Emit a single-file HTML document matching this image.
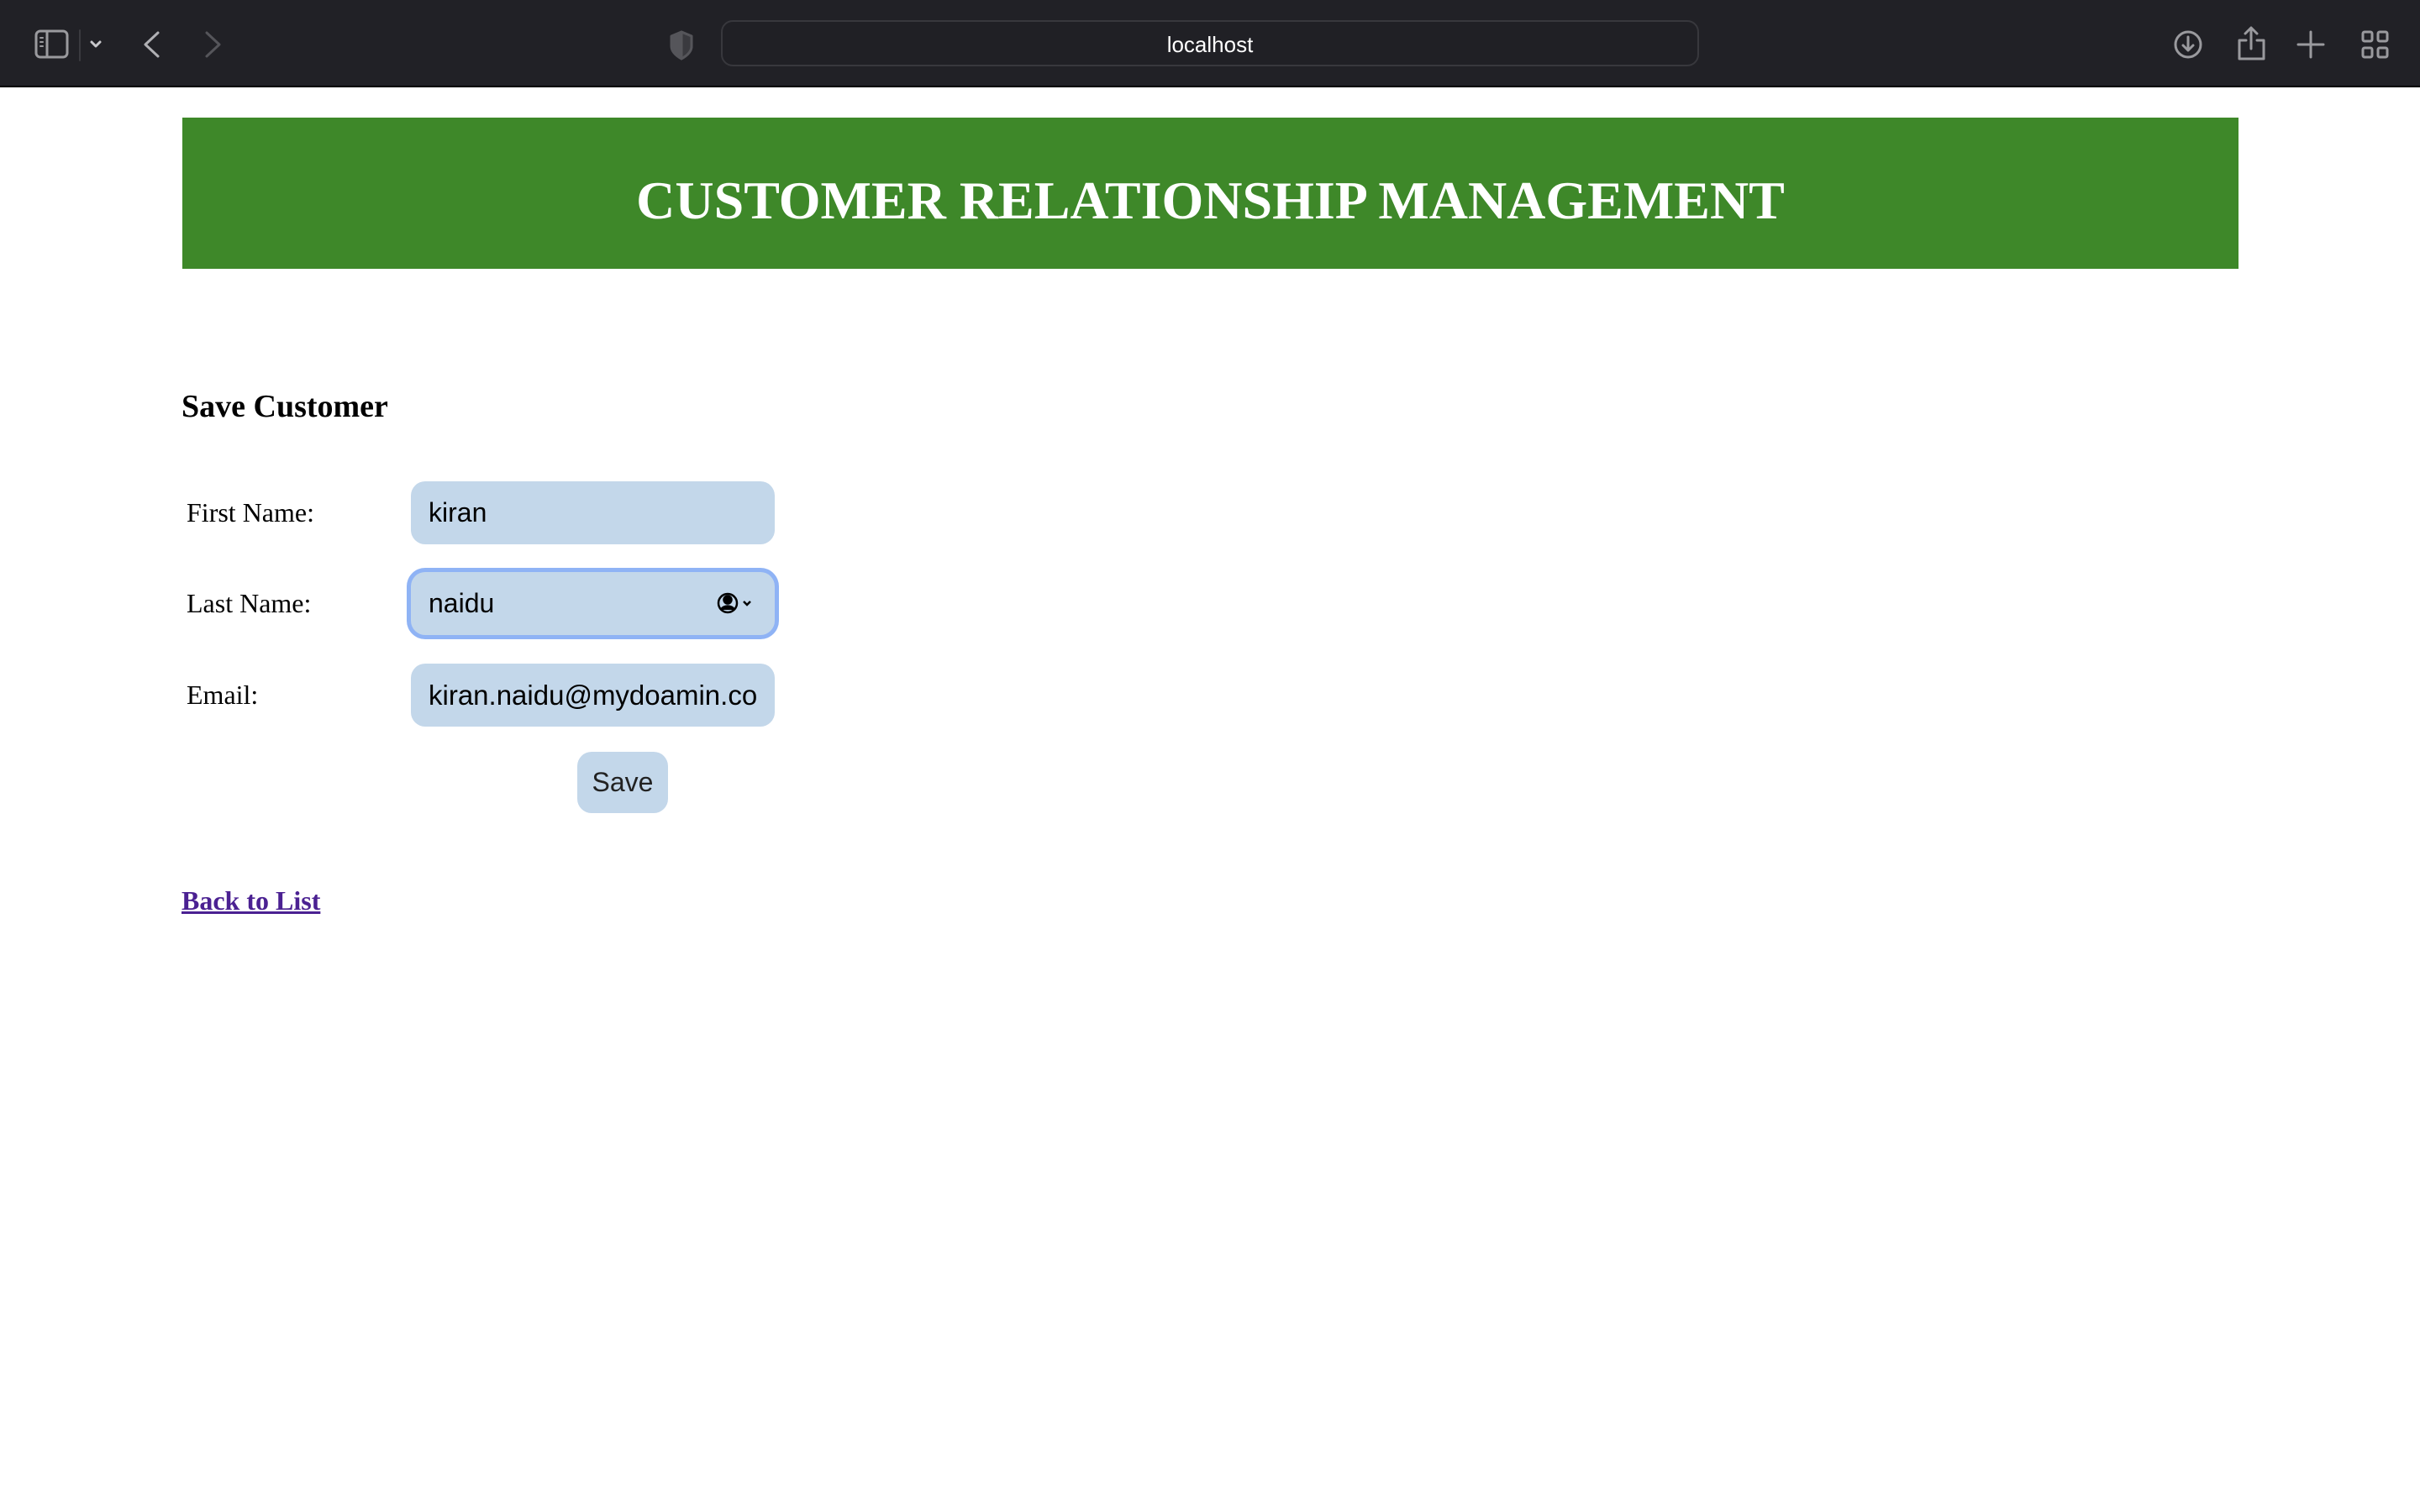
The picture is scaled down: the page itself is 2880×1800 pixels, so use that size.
<!DOCTYPE html>
<html><head><meta charset="utf-8"><style>
*{margin:0;padding:0;box-sizing:border-box}
body{width:2880px;height:1800px;background:#fff;position:relative;overflow:hidden;font-family:"Liberation Serif",serif}
#bar{position:absolute;left:0;top:0;width:2880px;height:104px;background:#212126;border-bottom:2px solid #000}
#addr{position:absolute;left:858px;top:24px;width:1164px;height:55px;border:2px solid #38383d;border-radius:14px;background:#202025}
#addr span{position:absolute;left:0;right:0;top:12px;text-align:center;color:#fff;font:26px "Liberation Sans",sans-serif}
.abs{position:absolute}
#banner{position:absolute;left:217px;top:140px;width:2447px;height:180px;background:#3e8829;color:#fff;text-align:center;font-weight:bold;font-size:64px;line-height:198px}
h3{position:absolute;left:216px;top:462px;font-size:38px;font-weight:bold}
.lbl{position:absolute;left:222px;font-size:32px;line-height:75px}
.inp{position:absolute;left:489px;width:433px;height:75px;background:#c3d7ea;border-radius:17px;font:32px "Liberation Sans",sans-serif;color:#000;padding-left:21px;line-height:75px;white-space:nowrap;overflow:hidden}
#save{position:absolute;left:687px;top:895px;width:108px;height:73px;background:#c3d7ea;border-radius:17px;font:32px "Liberation Sans",sans-serif;color:#222;text-align:center;line-height:73px}
a{position:absolute;left:216px;top:1054px;font-size:32px;font-weight:bold;color:#4b2192;text-decoration:underline}
</style></head><body>
<div id="bar">
<svg class="abs" style="left:0;top:0" width="2880" height="104" fill="none" stroke="#9a9a9e" stroke-width="3" stroke-linecap="round" stroke-linejoin="round">
<rect x="43" y="37" width="37" height="31" rx="5"/><line x1="56" y1="38" x2="56" y2="67"/>
<line x1="48" y1="45" x2="51" y2="45" stroke-width="2"/><line x1="48" y1="50" x2="51" y2="50" stroke-width="2"/><line x1="48" y1="55" x2="51" y2="55" stroke-width="2"/>
<line x1="95" y1="36" x2="95" y2="72" stroke="#3a3a3f" stroke-width="2"/>
<path d="M109 50l5 5 5-5" stroke="#c8c8cc"/>
<path d="M188 39l-15 14 15 14" stroke="#b0b0b4"/>
<path d="M246 39l15 14-15 14" stroke="#55555a"/>
<path d="M811 38l-12 5v12c0 6 5 11 12 15c7-4 12-9 12-15v-12z" stroke="#55555a" fill="#55555a"/>
<path d="M811 38l12 5v12c0 6-5 11-12 15z" fill="#3a3a3f" stroke="#55555a"/>
<rect x="1937" y="40" width="18" height="16" rx="3" stroke="#ccc" stroke-width="2.5"/>
<rect x="1955" y="48" width="18" height="16" rx="3" fill="#ccc" stroke="#ccc" stroke-width="2"/>
<path d="M2008 44a11 11 0 1 1-10-4" stroke="#ccc" stroke-width="2.5"/><path d="M1997 35l4 5-5 3" stroke="#ccc" stroke-width="2.5"/>
<circle cx="2604" cy="53" r="15"/><path d="M2604 44v16M2598 54l6 6 6-6"/>
<path d="M2673 48h-8v22h29v-22h-8M2679 34v24M2672 40l7-7 7 7"/>
<path d="M2750 38v30M2735 53h30"/>
<rect x="2812" y="38" width="11" height="11" rx="2"/><rect x="2830" y="38" width="11" height="11" rx="2"/><rect x="2812" y="57" width="11" height="11" rx="2"/><rect x="2830" y="57" width="11" height="11" rx="2"/>
</svg>
<div id="addr"><span>localhost</span></div>
</div>
<div id="banner">CUSTOMER RELATIONSHIP MANAGEMENT</div>
<h3>Save Customer</h3>
<div class="lbl" style="top:573px">First Name:</div>
<div class="lbl" style="top:681px">Last Name:</div>
<div class="lbl" style="top:790px">Email:</div>
<div class="inp" style="top:573px">kiran</div>
<div class="inp" style="top:681px;height:75px;box-shadow:0 0 0 5px #8fb3f5">naidu
<svg class="abs" style="left:363px;top:22px" width="54" height="32" fill="none" stroke="#000" stroke-width="2.5"><circle cx="14" cy="15" r="11"/><circle cx="14" cy="11" r="4.5" fill="#000"/><path d="M6 23c3-6 13-6 16 0" fill="#000"/><path d="M33 13l4 4 4-4"/></svg></div>
<div class="inp" style="top:790px"><span style="display:block;width:392px;overflow:hidden;font-size:33px">kiran.naidu@mydoamin.com</span></div>
<div id="save">Save</div>
<a>Back to List</a>
</body></html>
